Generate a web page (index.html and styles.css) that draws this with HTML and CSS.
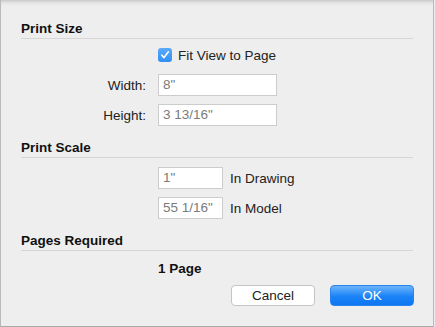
FILE: index.html
```html
<!DOCTYPE html>
<html lang="en">
<head>
  <meta charset="UTF-8" />
  <title>Print Setup</title>
  <link rel="stylesheet" href="styles.css">
</head>
<body>
  <div class="dialog">
    <h2 class="section-title first">Print Size</h2>
    <div class="form-row check-row">
      <span></span>
      <label class="check">
        <span class="checkbox">
          <svg width="10" height="10" viewBox="0 0 10 10"><path d="M1.8 5.2 L4 7.6 L8.4 1.8" fill="none" stroke="#fff" stroke-width="1.6" stroke-linecap="round" stroke-linejoin="round"/></svg>
        </span>
        Fit View to Page
      </label>
    </div>
    <div class="form-row">
      <label class="field-label">Width:</label>
      <div class="field wide">8"</div>
    </div>
    <div class="form-row tight">
      <label class="field-label">Height:</label>
      <div class="field wide">3 13/16"</div>
    </div>

    <h2 class="section-title">Print Scale</h2>
    <div class="form-row scale-first">
      <span></span>
      <div class="scale">
        <div class="field narrow">1"</div>
        <span>In Drawing</span>
      </div>
    </div>
    <div class="form-row tight">
      <span></span>
      <div class="scale">
        <div class="field narrow">55 1/16"</div>
        <span>In Model</span>
      </div>
    </div>

    <h2 class="section-title">Pages Required</h2>
    <div class="form-row pages">
      <span></span>
      <strong>1 Page</strong>
    </div>

    <div class="buttons">
      <button class="btn">Cancel</button>
      <button class="btn primary">OK</button>
    </div>
  </div>
</body>
</html>
```

FILE: styles.css
```css
* {
  box-sizing: border-box;
  margin: 0;
  padding: 0;
}
body {
  font-family: "Liberation Sans", Arial, sans-serif;
  font-size: 13.5px;
  color: #222;
  background-color: #eeeeee;
}
.dialog {
  width: 434px;
  height: 327px;
  padding: 20px 20px 0 20px;
  background: linear-gradient(#c9c9c9 0, #e6e6e6 3px, #eeeeee 6px, #eeeeee 100%);
  border-left: 1px solid #b9b9b9;
  border-right: 1px solid #b9b9b9;
  border-bottom: 1px solid #a9a9a9;
}
.section-title {
  font-size: 13.5px;
  font-weight: bold;
  color: #111;
  line-height: 16px;
  padding: 1px 0 1px;
  border-bottom: 1px solid #d6d6d6;
  margin-top: 13px;
}
.section-title.first {
  margin-top: 0;
}
.form-row {
  display: grid;
  grid-template-columns: 125px auto;
  column-gap: 12px;
  align-items: center;
  margin-top: 12px;
}
.form-row.tight {
  margin-top: 8px;
}
.form-row.check-row {
  margin-top: 9px;
}
.form-row.scale-first {
  margin-top: 9px;
}
.form-row.pages {
  margin-top: 10px;
  line-height: 16px;
}
.field-label {
  text-align: right;
}
.check {
  display: flex;
  align-items: center;
  gap: 6px;
  height: 14px;
}
.checkbox {
  width: 14px;
  height: 14px;
  border-radius: 3px;
  background: linear-gradient(#5aaafc, #2f8ff5);
  display: flex;
  align-items: center;
  justify-content: center;
}
.field {
  height: 22px;
  line-height: 20px;
  padding: 0 4px;
  background-color: #fff;
  border: 1px solid #cccccc;
  color: #7b7b7b;
}
.field.wide {
  width: 119px;
}
.field.narrow {
  width: 65px;
}
.scale {
  display: flex;
  align-items: center;
  gap: 7px;
}
.pages strong {
  color: #111;
}
.buttons {
  display: flex;
  justify-content: flex-end;
  gap: 15px;
  margin-top: 8px;
  margin-right: -1px;
}
.btn {
  width: 84px;
  height: 21px;
  font-family: "Liberation Sans", Arial, sans-serif;
  font-size: 13.5px;
  color: #222;
  background-color: #fff;
  border: 1px solid #c4c4c4;
  border-radius: 4px;
}
.btn.primary {
  color: #fff;
  border: 1px solid #2a83ef;
  background: linear-gradient(#6ab4fb, #1c83f6 55%, #0d77f2);
}
```
